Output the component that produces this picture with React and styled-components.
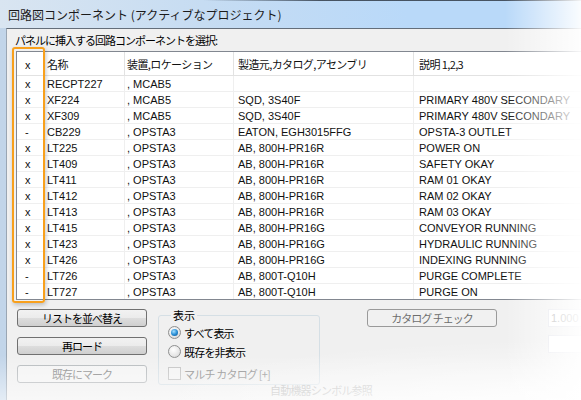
import React from "react";
import styled, { createGlobalStyle } from "styled-components";

const jp = `"Noto Sans CJK JP", sans-serif`;
const latin = `"Liberation Sans", "Noto Sans CJK JP", sans-serif`;

const GlobalStyle = createGlobalStyle`
    html, body {
        margin: 0;
        padding: 0;
        background: #fff;
        overflow: hidden;
    }
    body {
        font-family: ${latin};
    }
`;

const Window = styled.div`
    position: relative;
    width: 581px;
    height: 400px;
    display: flex;
    flex-direction: column;
    overflow: hidden;
`;

const TitleBar = styled.div`
    height: 28px;
    flex: none;
    display: flex;
    align-items: center;
    padding-left: 8px;
    font-family: ${jp};
    font-size: 12px;
    color: #1b1b1b;
    background:
        linear-gradient(to right, rgba(50, 60, 72, 0) 35%, rgba(50, 60, 72, .85) 55%) top / 100% 1px no-repeat,
        linear-gradient(to right, #d9e5f1 0%, #c6dcf2 35%, #b9d9f9 70%);
`;

const Frame = styled.div`
    flex: 1;
    display: flex;
    padding-left: 6px;
    background: linear-gradient(to right, #c2d5e9, #d9e6f3);
`;

const Client = styled.div`
    flex: 1;
    min-width: 0;
    display: flex;
    flex-direction: column;
    background: #f0f0f0;
    border-top: 1px solid #646e7a;
    border-left: 1px solid #9aa6b3;
    padding-left: 9px;
`;

const Prompt = styled.div`
    height: 22px;
    line-height: 22px;
    margin-left: -1px;
    font-family: ${jp};
    font-size: 11px;
    letter-spacing: -1px;
    color: #000;
`;

const List = styled.div`
    border: 1px solid #828790;
    border-right: none;
    background: #fff;
    font-family: ${latin};
    font-size: 11px;
    color: #111;
`;

const Row = styled.div`
    display: grid;
    grid-template-columns: 28px 80px 109px 180px 1fr;
    height: ${p => (p.$head ? 23 : 15)}px;
    border-bottom: 1px solid ${p => (p.$head ? "#e2e2e2" : "#efefef")};

    &:last-child {
        border-bottom: none;
    }
`;

const Cell = styled.div`
    display: flex;
    align-items: center;
    padding-left: ${p => p.$pad}px;
    border-right: 1px solid ${p => (p.$head ? "#e2e2e2" : "#efefef")};
    white-space: nowrap;
    overflow: hidden;
    font-family: ${p => (p.$head ? jp : latin)};
    letter-spacing: ${p => (p.$head ? "-0.6px" : "0")};

    &:last-child {
        border-right: none;
    }
`;

const Highlight = styled.div`
    position: absolute;
    left: 12px;
    top: 47px;
    width: 33px;
    height: 256px;
    box-sizing: border-box;
    border: 2px solid #f8a01c;
    border-radius: 3px;
    box-shadow: 1px 2px 4px rgba(0, 0, 0, .22);
    pointer-events: none;
`;

const Bottom = styled.div`
    display: flex;
    flex-direction: column;
    padding: 9px 0 0 1px;
`;

const Controls = styled.div`
    display: flex;
    align-items: flex-start;
`;

const ButtonCol = styled.div`
    display: flex;
    flex-direction: column;
    gap: 10px;
    width: 130px;
`;

const tones = {
    normal: { border: "#707070", text: "#000", bg: "linear-gradient(#f2f2f2 0%, #ebebeb 50%, #dddddd 51%, #cfcfcf 100%)" },
    disabled: { border: "#b5b9bc", text: "#8a8a8a", bg: "#f4f4f4" },
    muted: { border: "#9a9a9a", text: "#6e6e6e", bg: "#f1f1f1" },
};

const Button = styled.div`
    flex: none;
    box-sizing: border-box;
    width: 130px;
    height: 18px;
    display: flex;
    align-items: center;
    justify-content: center;
    border: 1px solid ${p => tones[p.$tone || "normal"].border};
    border-radius: 3px;
    background: ${p => tones[p.$tone || "normal"].bg};
    font-family: ${jp};
    font-size: 11px;
    letter-spacing: -1px;
    color: ${p => tones[p.$tone || "normal"].text};
    margin-left: ${p => p.$ml || 0}px;
`;

const Group = styled.fieldset`
    flex: none;
    box-sizing: border-box;
    width: 162px;
    height: 76px;
    margin: 0 0 0 11px;
    padding: 0 0 0 9px;
    border: 1px solid #d5dfe5;
    border-radius: 3px;

    legend {
        padding: 0 2px;
        margin-left: 3px;
        line-height: 12px;
        font-family: ${jp};
        font-size: 11px;
        color: #000;
    }
`;

const Option = styled.div`
    display: flex;
    align-items: center;
    gap: 3px;
    height: 19px;
    margin-top: ${p => p.$mt || 0}px;
    font-family: ${jp};
    font-size: 11px;
    letter-spacing: -0.8px;
    color: ${p => (p.$disabled ? "#8a8a8a" : "#000")};
`;

const Radio = styled.span`
    position: relative;
    box-sizing: border-box;
    width: 13px;
    height: 13px;
    border-radius: 50%;
    border: 1px solid #8e8f8f;
    background: radial-gradient(circle at 40% 35%, #ffffff, #e6e6e6 60%, #c9c9c9);

    &::after {
        content: "";
        display: ${p => (p.$on ? "block" : "none")};
        position: absolute;
        left: 2px;
        top: 2px;
        width: 7px;
        height: 7px;
        border-radius: 50%;
        background: radial-gradient(circle at 40% 35%, #a5e0ff, #2a8fd6 50%, #0b4d88);
    }
`;

const Check = styled.span`
    box-sizing: border-box;
    width: 13px;
    height: 13px;
    border: 1px solid #c2c2c2;
    background: #f4f4f4;
`;

const Inputs = styled.div`
    flex: none;
    display: flex;
    flex-direction: column;
    gap: 8px;
    margin-left: 51px;
`;

const Input = styled.div`
    box-sizing: border-box;
    width: 70px;
    height: 18px;
    display: flex;
    align-items: center;
    padding-left: 2px;
    border: 1px solid #e2e3ea;
    background: #fff;
    font-family: ${latin};
    font-size: 11px;
    color: #a3a3a3;
`;

const Caption = styled.div`
    margin: -1px 0 0 253px;
    line-height: 13px;
    font-family: ${jp};
    font-size: 11px;
    letter-spacing: -0.8px;
    color: #a9a9a9;
    white-space: nowrap;
`;

const Fade = styled.div`
    position: absolute;
    inset: 0;
    pointer-events: none;
    background:
        linear-gradient(to right, rgba(255, 255, 255, 0) 505px, rgba(255, 255, 255, .93) 581px),
        radial-gradient(ellipse 420px 70px at 560px 410px, rgba(255, 255, 255, .95), rgba(255, 255, 255, 0)),
        linear-gradient(to bottom, rgba(255, 255, 255, 0) 355px, rgba(255, 255, 255, .55) 400px);
`;

const pads = [8, 2, 2, 4, 5];

const headers = ["x", "名称", "装置,ロケーション", "製造元,カタログ,アセンブリ", "説明 1,2,3"];

const rows = [
    ["x", "RECPT227", ", MCAB5", "", ""],
    ["x", "XF224", ", MCAB5", "SQD, 3S40F", "PRIMARY 480V SECONDARY"],
    ["x", "XF309", ", MCAB5", "SQD, 3S40F", "PRIMARY 480V SECONDARY"],
    ["-", "CB229", ", OPSTA3", "EATON, EGH3015FFG", "OPSTA-3 OUTLET"],
    ["x", "LT225", ", OPSTA3", "AB, 800H-PR16R", "POWER ON"],
    ["x", "LT409", ", OPSTA3", "AB, 800H-PR16R", "SAFETY OKAY"],
    ["x", "LT411", ", OPSTA3", "AB, 800H-PR16R", "RAM 01 OKAY"],
    ["x", "LT412", ", OPSTA3", "AB, 800H-PR16R", "RAM 02 OKAY"],
    ["x", "LT413", ", OPSTA3", "AB, 800H-PR16R", "RAM 03 OKAY"],
    ["x", "LT415", ", OPSTA3", "AB, 800H-PR16G", "CONVEYOR RUNNING"],
    ["x", "LT423", ", OPSTA3", "AB, 800H-PR16G", "HYDRAULIC RUNNING"],
    ["x", "LT426", ", OPSTA3", "AB, 800H-PR16G", "INDEXING RUNNING"],
    ["-", "LT726", ", OPSTA3", "AB, 800T-Q10H", "PURGE COMPLETE"],
    ["-", "LT727", ", OPSTA3", "AB, 800T-Q10H", "PURGE ON"],
];

const App = () => {
    return (
        <>
            <GlobalStyle />
            <Window>
                <TitleBar>回路図コンポーネント (アクティブなプロジェクト)</TitleBar>
                <Frame>
                    <Client>
                        <Prompt>パネルに挿入する回路コンポーネントを選択:</Prompt>
                        <List>
                            <Row $head>
                                {headers.map((h, i) => (
                                    <Cell key={i} $head $pad={pads[i]}>{h}</Cell>
                                ))}
                            </Row>
                            {rows.map((r, ri) => (
                                <Row key={ri}>
                                    {r.map((c, ci) => (
                                        <Cell key={ci} $pad={pads[ci]}>{c}</Cell>
                                    ))}
                                </Row>
                            ))}
                        </List>
                        <Bottom>
                            <Controls>
                                <ButtonCol>
                                    <Button>リストを並べ替え</Button>
                                    <Button>再ロード</Button>
                                    <Button $tone="disabled">既存にマーク</Button>
                                </ButtonCol>
                                <Group>
                                    <legend>表示</legend>
                                    <Option $mt={2}><Radio $on />すべて表示</Option>
                                    <Option><Radio />既存を非表示</Option>
                                    <Option $mt={3} $disabled><Check />マルチ カタログ [+]</Option>
                                </Group>
                                <Button $tone="muted" $ml={47}>カタログ チェック</Button>
                                <Inputs>
                                    <Input>1.000</Input>
                                    <Input />
                                </Inputs>
                            </Controls>
                            <Caption>自動機器シンボル参照</Caption>
                        </Bottom>
                    </Client>
                </Frame>
                <Highlight />
                <Fade />
            </Window>
        </>
    );
};

export default App;
